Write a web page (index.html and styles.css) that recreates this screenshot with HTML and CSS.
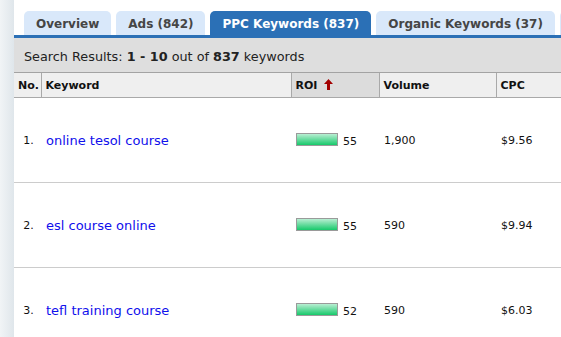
FILE: index.html
```html
<!DOCTYPE html>
<html lang="en">
<head>
  <meta charset="UTF-8">
  <meta name="viewport" content="width=device-width, initial-scale=1.0">
  <title>PPC Keywords</title>
  <link rel="stylesheet" href="styles.css">
</head>
<body>
  <div class="page">
    <div class="sidebar"></div>
    <div class="main">
      <ul class="tabs">
        <li class="tab">Overview</li>
        <li class="tab">Ads (842)</li>
        <li class="tab active">PPC Keywords (837)</li>
        <li class="tab">Organic Keywords (37)</li>
        <li class="tab"></li>
      </ul>
      <div class="results-bar">
        Search Results: <b>1 - 10</b> out of <b>837</b> keywords
      </div>
      <table class="keywords">
        <thead>
          <tr>
            <th class="col-no">No.</th>
            <th class="col-keyword">Keyword</th>
            <th class="col-roi sorted">ROI
              <svg class="sort-arrow" width="9" height="11" viewBox="0 0 9 11">
                <path d="M4.5 0 L9 5 L6 5 L6 11 L3 11 L3 5 L0 5 Z" fill="#a30000"/>
              </svg>
            </th>
            <th class="col-volume">Volume</th>
            <th class="col-cpc">CPC</th>
          </tr>
        </thead>
        <tbody>
          <tr>
            <td class="num">1.</td>
            <td><a href="#">online tesol course</a></td>
            <td><span class="roi-bar"></span>55</td>
            <td>1,900</td>
            <td>$9.56</td>
          </tr>
          <tr>
            <td class="num">2.</td>
            <td><a href="#">esl course online</a></td>
            <td><span class="roi-bar"></span>55</td>
            <td>590</td>
            <td>$9.94</td>
          </tr>
          <tr>
            <td class="num">3.</td>
            <td><a href="#">tefl training course</a></td>
            <td><span class="roi-bar"></span>52</td>
            <td>590</td>
            <td>$6.03</td>
          </tr>
        </tbody>
      </table>
    </div>
  </div>
</body>
</html>
```

FILE: styles.css
```css
/* Base */
* {
  margin: 0;
  padding: 0;
  box-sizing: border-box;
}

body {
  font-family: 'DejaVu Sans', Verdana, sans-serif;
  background: #fff;
  color: #222;
  width: 561px;
  height: 337px;
  overflow: hidden;
}

.page {
  display: flex;
  height: 337px;
}

.sidebar {
  width: 14px;
  flex-shrink: 0;
  background: linear-gradient(to right, #f1f4f6, #dfe6eb);
}

.main {
  flex: 1;
  min-width: 0;
  overflow: hidden;
}

/* Tabs */
.tabs {
  list-style: none;
  display: flex;
  gap: 5px;
  padding: 11px 0 0 10px;
  border-bottom: 3px solid #2b70b6;
  white-space: nowrap;
}

.tab {
  height: 24px;
  line-height: 22px;
  padding: 2px 12px 0;
  background: #d9e8fa;
  color: #454545;
  font-size: 12px;
  font-weight: bold;
  border-radius: 5px 5px 0 0;
  flex-shrink: 0;
}

.tab.active {
  background: #2b70b6;
  color: #fff;
}

/* Results bar */
.results-bar {
  height: 35px;
  line-height: 30px;
  padding: 4px 0 0 10px;
  background: #dedede;
  border-bottom: 1px solid #a3a3a3;
  font-size: 12.8px;
  color: #222;
}

/* Table */
.keywords {
  border-collapse: collapse;
  width: 560px;
  font-size: 11px;
  table-layout: fixed;
}

.keywords th {
  height: 24px;
  text-align: left;
  font-weight: bold;
  padding: 2px 4px 0;
  background: #efefef;
  border-left: 1px solid #a9a9a9;
  border-bottom: 1px solid #a9a9a9;
  color: #111;
  white-space: nowrap;
}

.keywords th:first-child {
  border-left: none;
}

.keywords th.sorted {
  background: #dcdcdc;
}

.sort-arrow {
  vertical-align: -1px;
  margin-left: 3px;
}

.col-no { width: 27px; }
.col-keyword { width: 250px; }
.col-roi { width: 88px; }
.col-volume { width: 117px; }

.keywords td {
  height: 85px;
  padding: 2px 5px 0;
  border-bottom: 1px solid #cccccc;
  white-space: nowrap;
  color: #111;
}

.keywords td.num {
  text-align: center;
  padding: 2px 0 0 2px;
}

.keywords td a {
  color: #1010ec;
  text-decoration: none;
  font-size: 13px;
}

.roi-bar {
  display: inline-block;
  width: 42px;
  height: 13px;
  margin-right: 5px;
  vertical-align: -1px;
  border: 1px solid #9a9a9a;
  background: linear-gradient(to bottom, #b8eed2, #17c96b);
}
```
